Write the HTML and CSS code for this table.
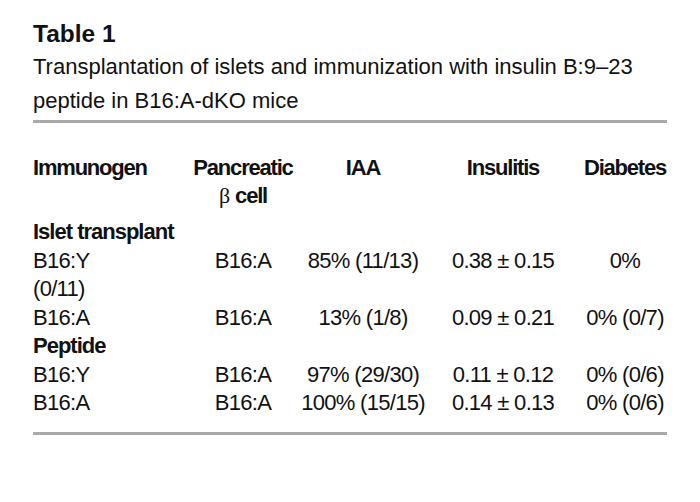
FILE: index.html
```html
<!DOCTYPE html>
<html>
<head>
<meta charset="utf-8">
<link rel="stylesheet" href="styles.css">
</head>
<body>
<div class="wrap">
  <h1 class="title">Table 1</h1>
  <p class="caption">Transplantation of islets and immunization with insulin B:9–23 peptide in B16:A-dKO mice</p>
  <table class="data">
    <colgroup>
      <col class="c1"><col class="c2"><col class="c3"><col class="c4"><col class="c5">
    </colgroup>
    <thead>
      <tr>
        <th class="left">Immunogen</th>
        <th>Pancreatic<br><span class="greek">β</span> cell</th>
        <th>IAA</th>
        <th>Insulitis</th>
        <th class="last">Diabetes</th>
      </tr>
    </thead>
    <tbody>
      <tr class="group"><td class="left" colspan="5">Islet transplant</td></tr>
      <tr><td class="left">B16:Y</td><td>B16:A</td><td>85% (11/13)</td><td>0.38 ± 0.15</td><td class="last">0%</td></tr>
      <tr><td class="left">(0/11)</td><td></td><td></td><td></td><td class="last"></td></tr>
      <tr><td class="left">B16:A</td><td>B16:A</td><td>13% (1/8)</td><td>0.09 ± 0.21</td><td class="last">0% (0/7)</td></tr>
      <tr class="group"><td class="left" colspan="5">Peptide</td></tr>
      <tr><td class="left">B16:Y</td><td>B16:A</td><td>97% (29/30)</td><td>0.11 ± 0.12</td><td class="last">0% (0/6)</td></tr>
      <tr><td class="left">B16:A</td><td>B16:A</td><td>100% (15/15)</td><td>0.14 ± 0.13</td><td class="last">0% (0/6)</td></tr>
    </tbody>
  </table>
</div>
</body>
</html>
```
FILE: styles.css
```css
html, body {
  margin: 0;
  padding: 0;
  background: #ffffff;
}
body {
  color: #111111;
  font-family: "Liberation Sans", Arial, sans-serif;
}
.wrap {
  width: 634px;
  padding: 19px 0 0 33px;
}
.title {
  margin: 0;
  font-weight: bold;
  font-size: 24.5px;
  line-height: 30px;
}
.caption {
  margin: 1px 0 0 0;
  font-size: 22px;
  line-height: 34px;
  padding-bottom: 2px;
  border-bottom: 3px solid #a9a9a9;
}
.data {
  width: 634px;
  border-collapse: collapse;
  table-layout: fixed;
  margin-top: 31px;
  border-bottom: 3px solid #a9a9a9;
}
.c1 { width: 155px; }
.c2 { width: 110px; }
.c3 { width: 130px; }
.c4 { width: 150px; }
.c5 { width: 89px; }
.data th, .data td {
  padding: 0;
  text-align: center;
  font-size: 22px;
  white-space: nowrap;
}
.data th {
  font-weight: bold;
  line-height: 28px;
  vertical-align: top;
  letter-spacing: -1.2px;
}
.data thead tr th {
  padding-bottom: 8px;
}
.data td {
  line-height: 28.5px;
  letter-spacing: -0.7px;
}
.data tbody tr:last-child td {
  padding-bottom: 14px;
}
.data .left {
  text-align: left;
}
.data .last {
  padding-left: 5px;
}
.group td {
  font-weight: bold;
  letter-spacing: -1px;
}
.greek {
  font-family: "Liberation Serif", "Times New Roman", serif;
  font-weight: normal;
  letter-spacing: 0;
}
```
